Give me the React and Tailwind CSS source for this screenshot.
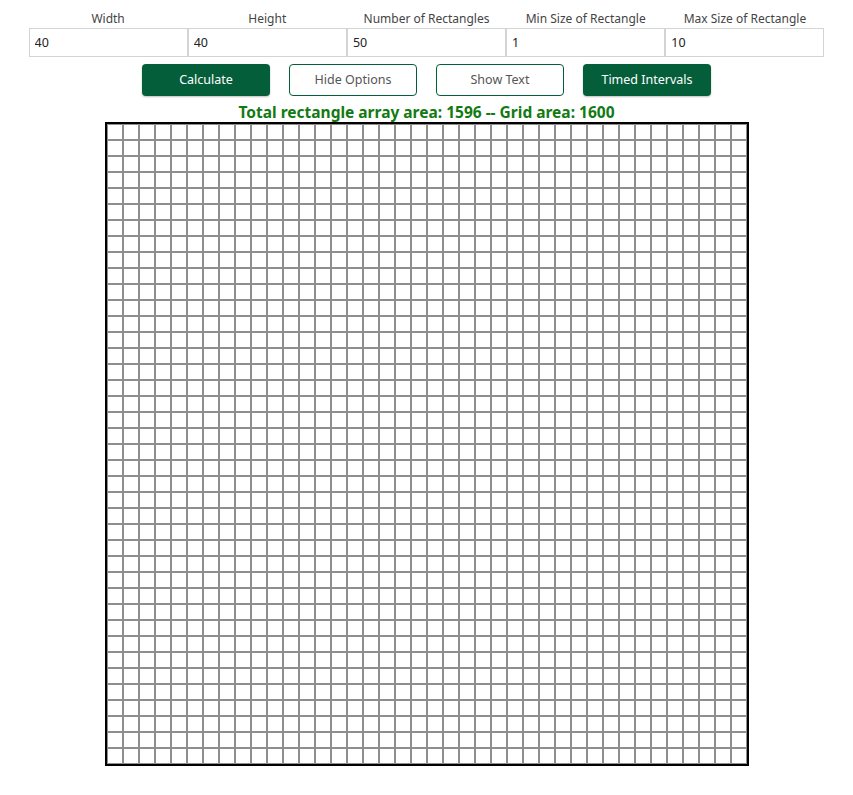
import React from "react";

const fields = [
  { label: "Width", value: "40" },
  { label: "Height", value: "40" },
  { label: "Number of Rectangles", value: "50" },
  { label: "Min Size of Rectangle", value: "1" },
  { label: "Max Size of Rectangle", value: "10" },
];

export default function App() {
  const cells = Array.from({ length: 1600 });
  return (
    <div
      className="min-h-[795px] bg-white text-[#333]"
      style={{ fontFamily: '"Noto Sans", "Open Sans", sans-serif' }}
    >
      <div className="mx-auto w-[796px] pt-[9px]">
        <div className="grid grid-cols-5">
          {fields.map((f) => (
            <div key={f.label} className="flex flex-col">
              <label className="text-center text-[12px] leading-[19px] text-[#444]">
                {f.label}
              </label>
              <input
                readOnly
                value={f.value}
                className="h-[29px] w-full border border-[#d4d4d4] px-[5px] text-[12.5px] text-[#222] outline-none"
              />
            </div>
          ))}
        </div>
        <div className="mt-[7px] flex justify-center gap-[19px]">
          <button className="h-[32px] w-[128px] rounded-[4px] bg-[#055e3a] text-[12.5px] text-white shadow-[0_1px_2px_rgba(0,0,0,0.25)]">
            Calculate
          </button>
          <button className="h-[32px] w-[128px] rounded-[4px] border border-[#055e3a] bg-white text-[12.5px] text-[#555]">
            Hide Options
          </button>
          <button className="h-[32px] w-[128px] rounded-[4px] border border-[#055e3a] bg-white text-[12.5px] text-[#555]">
            Show Text
          </button>
          <button className="h-[32px] w-[128px] rounded-[4px] bg-[#055e3a] text-[12.5px] text-white shadow-[0_1px_2px_rgba(0,0,0,0.25)]">
            Timed Intervals
          </button>
        </div>
        <div className="mt-[7px] text-center text-[15.5px] font-bold leading-[19px] text-[#127a12]">
          Total rectangle array area: 1596 -- Grid area: 1600
        </div>
        <div className="flex justify-center">
          <div className="grid w-[644px] grid-cols-[repeat(40,16px)] border-2 border-black">
            {cells.map((_, i) => (
              <div key={i} className="h-4 w-4 border border-[#8e8e8e]" />
            ))}
          </div>
        </div>
      </div>
    </div>
  );
}
